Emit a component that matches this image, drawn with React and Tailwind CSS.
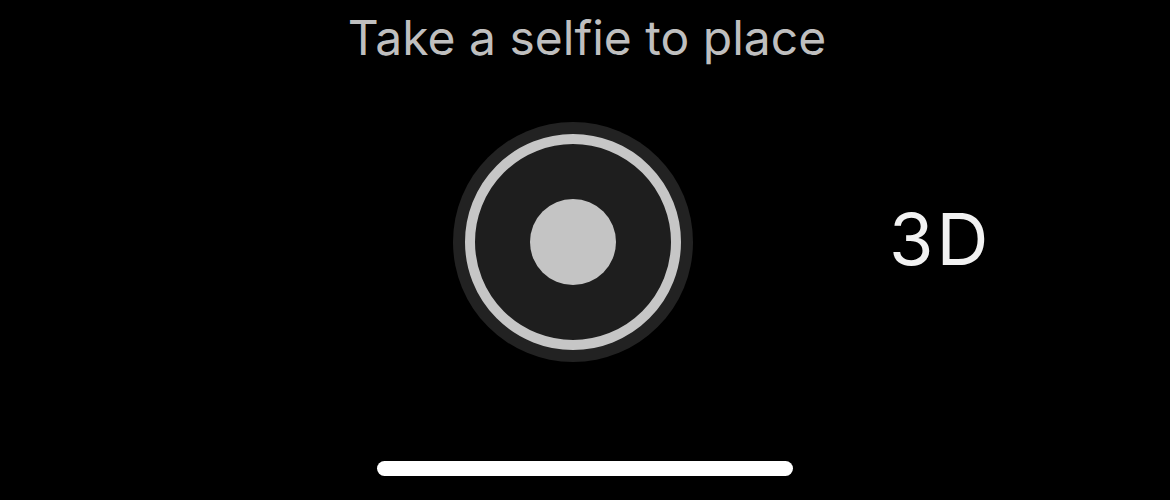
import React from 'react';

const App = () => {
  return (
    <div
      className="w-[1170px] h-[500px] bg-black overflow-hidden flex flex-col"
      style={{ fontFamily: 'Inter, "Noto Sans", sans-serif' }}
    >
      {/* hint */}
      <div className="pt-[9px] text-center text-[48px] leading-[58px] text-[#bfbfbf] pl-[4px]">
        Take a selfie to place
      </div>

      {/* shutter row */}
      <div className="mt-[55px] flex items-center pl-[453px]">
        <div className="w-[240px] h-[240px] rounded-full bg-[#222222] flex items-center justify-center">
          <div className="w-[216px] h-[216px] rounded-full border-[10px] border-[#c6c6c6] bg-[#1e1e1e] flex items-center justify-center">
            <div className="w-[86px] h-[86px] rounded-full bg-[#c4c4c4]"></div>
          </div>
        </div>
        <div className="ml-[196px] mb-[6px] text-[72px] leading-[72px] tracking-[3px] text-[#f2f2f2]">3D</div>
      </div>

      {/* home indicator */}
      <div className="mt-[99px] flex justify-center">
        <div className="w-[416px] h-[15px] rounded-full bg-white"></div>
      </div>
    </div>
  );
};

export default App;
